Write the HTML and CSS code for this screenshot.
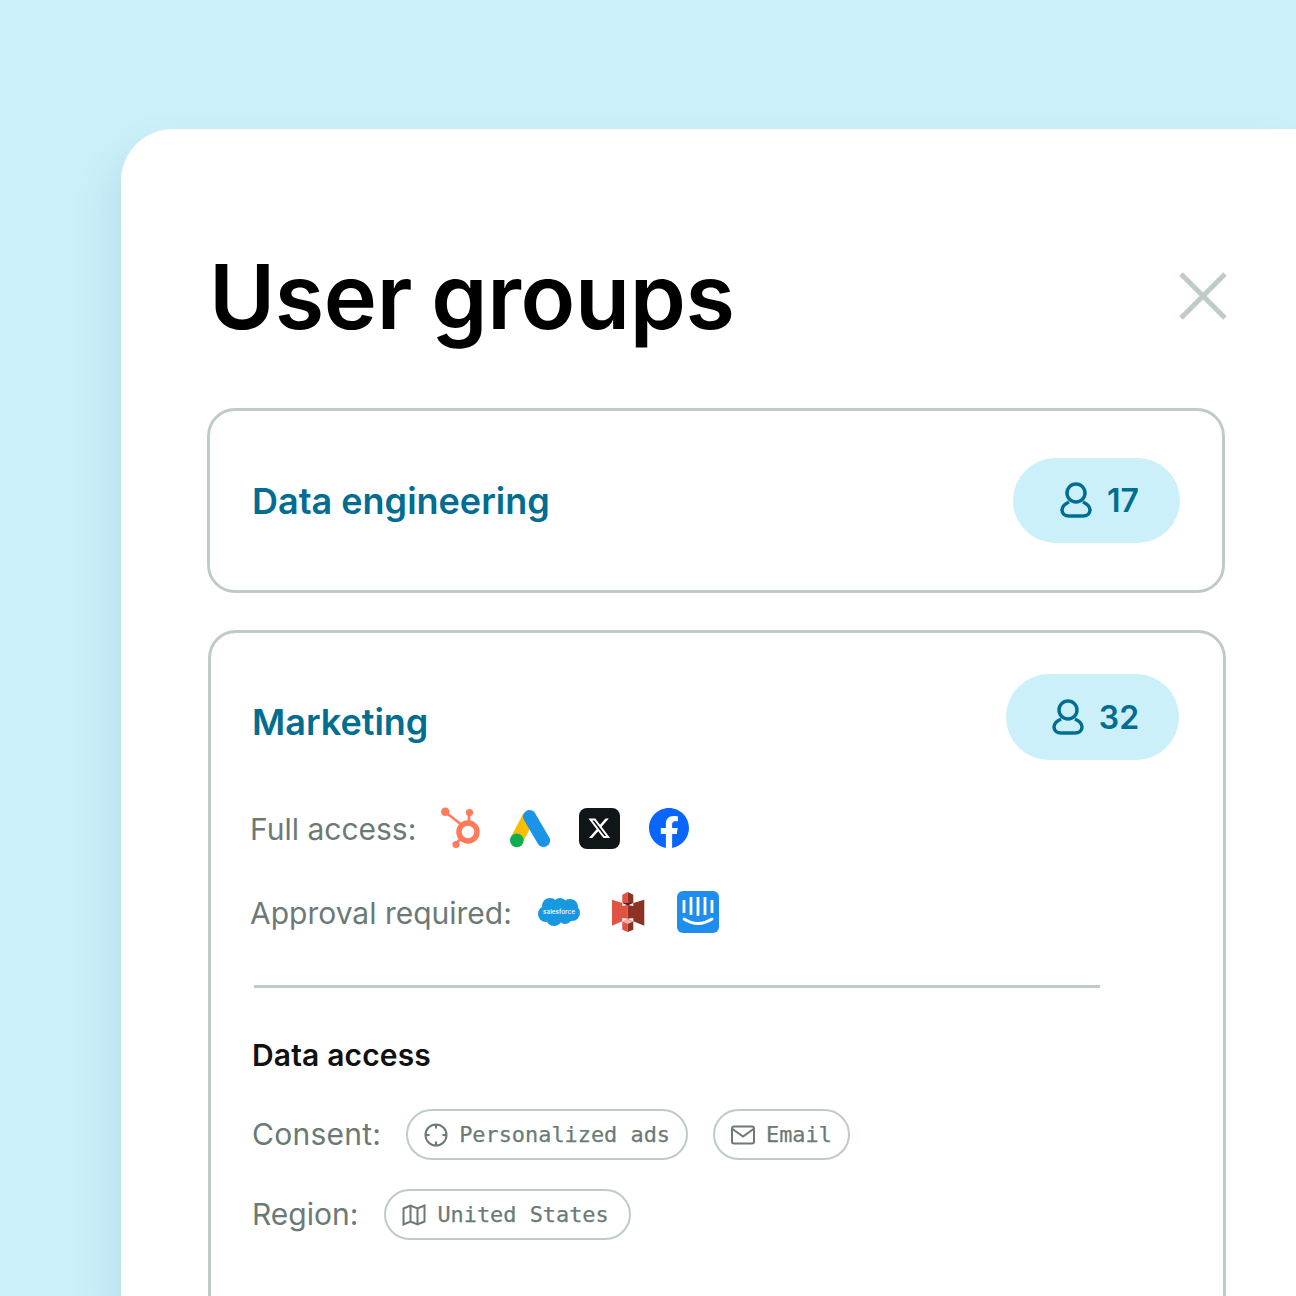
FILE: index.html
```html
<!DOCTYPE html>
<html lang="en">

<head>
    <meta charset="UTF-8">
    <title>User groups</title>
    <link rel="stylesheet" href="styles.css">
</head>

<body>
    <div class="panel">
        <div class="top">
            <h1>User groups</h1>
            <svg class="close" viewBox="0 0 48 48">
                <path d="M2 2L46 46M46 2L2 46" />
            </svg>
        </div>

        <div class="card first">
            <h2>Data engineering</h2>
            <div class="count">
                <svg class="user" viewBox="0 0 32 36">
                    <circle cx="16" cy="11" r="9" />
                    <path d="M9 20C5 22 2 25 2 28C2 32 5 34 9 34H23C27 34 30 32 30 28C30 25 27 22 23 20" />
                </svg>
                <span>17</span>
            </div>
        </div>

        <div class="card second">
            <div class="head">
                <h2>Marketing</h2>
                <div class="count wide">
                    <svg class="user" viewBox="0 0 32 36">
                        <circle cx="16" cy="11" r="9" />
                        <path d="M9 20C5 22 2 25 2 28C2 32 5 34 9 34H23C27 34 30 32 30 28C30 25 27 22 23 20" />
                    </svg>
                    <span>32</span>
                </div>
            </div>

            <div class="row access">
                <label>Full access:</label>
                <svg class="logo" width="40" height="42" viewBox="0 0 40 42">
                    <g fill="none" stroke="#ff7a59">
                        <circle cx="27" cy="25" r="9" stroke-width="5.5" />
                        <path d="M4 5L21 18M28 5V16M14 37L21 31" stroke-width="2.6" />
                    </g>
                    <g fill="#ff7a59">
                        <circle cx="4.3" cy="4.8" r="4.3" />
                        <circle cx="28.5" cy="5.5" r="3.6" />
                        <circle cx="15" cy="37.5" r="3.6" />
                    </g>
                </svg>
                <svg class="logo" width="40" height="40" viewBox="0 0 40 40">
                    <path d="M19 8.5L6.7 32" stroke="#fbbc04" stroke-width="13" fill="none" />
                    <path d="M19.5 8.5L33.5 32.5" stroke="#1a94e6" stroke-width="13" stroke-linecap="round" fill="none" />
                    <circle cx="6.8" cy="32.4" r="6.8" fill="#0ead4f" />
                </svg>
                <svg class="logo" width="41" height="41" viewBox="0 0 41 41">
                    <rect width="41" height="41" rx="8" fill="#101518" />
                    <path transform="translate(9.5 9.5) scale(0.9)" fill="#fff" d="M18.901 1.153h3.68l-8.04 9.19L24 22.846h-7.406l-5.8-7.584-6.638 7.584H.474l8.6-9.83L0 1.154h7.594l5.243 6.932ZM17.61 20.644h2.039L6.486 3.24H4.298Z" />
                </svg>
                <svg class="logo" width="40" height="40" viewBox="0 0 24 24">
                    <path fill="#0866ff" d="M24 12.073c0-6.627-5.373-12-12-12s-12 5.373-12 12c0 5.99 4.388 10.954 10.125 11.854v-8.385H7.078v-3.47h3.047V9.43c0-3.007 1.792-4.669 4.533-4.669 1.312 0 2.686.235 2.686.235v2.953H15.83c-1.491 0-1.956.925-1.956 1.874v2.25h3.328l-.532 3.47h-2.796v8.385C19.612 23.027 24 18.062 24 12.073z" />
                </svg>
            </div>

            <div class="row approval">
                <label>Approval required:</label>
                <svg class="logo" width="42" height="30" viewBox="0 0 42 30">
                    <g fill="#1798e0">
                        <circle cx="12" cy="9" r="8" />
                        <circle cx="22" cy="8" r="7" />
                        <circle cx="32" cy="10" r="8" />
                        <circle cx="34" cy="16" r="8" />
                        <circle cx="8" cy="17" r="8" />
                        <circle cx="16" cy="21" r="8" />
                        <circle cx="27" cy="20" r="7" />
                    </g>
                    <text x="21" y="16.5" text-anchor="middle" class="sf">salesforce</text>
                </svg>
                <svg class="logo s3" width="34" height="40" viewBox="0 0 34 40">
                    <path fill="#e05243" d="M1 7.700L11.300 11V29.300L1 33.700ZM11.300 2.700L16.700 0V11H11.300ZM11.300 14L16.700 13V26.700L11.300 26ZM11.300 29.500L16.700 27V40L11.300 37.700Z" />
                    <path fill="#8c3123" d="M33.300 7.700L22.300 11V29.300L33.300 33.700ZM22.300 2.700L16.700 0V11H22.300ZM22.300 14L16.700 13V26.700L22.300 26ZM22.300 29.500L16.700 27V40L22.300 37.700Z" />
                    <path fill="#f2b0a5" d="M11.300 29.500L16.700 27L22.300 29.500L16.700 32Z" />
                    <path fill="#5e1f18" d="M11.300 11H22.300L16.700 13.500Z" />
                </svg>
                <svg class="logo" width="42" height="42" viewBox="0 0 42 42">
                    <rect width="42" height="42" rx="6" fill="#1f8ded" />
                    <path d="M7 9V22M14 6V24M21 6V25M28 6V24M35 9V22" stroke="#fff" stroke-width="2.800" fill="none" />
                    <path d="M7 28Q21 37 35 28" stroke="#fff" stroke-width="2.800" fill="none" stroke-linecap="round" />
                </svg>
            </div>

            <hr>

            <h3>Data access</h3>

            <div class="row consent">
                <label>Consent:</label>
                <div class="chip">
                    <svg viewBox="0 0 24 24">
                        <circle cx="12" cy="12" r="10.500" />
                        <path d="M12 1.500V5.500M12 18.500V22.500M1.500 12H5.500M18.500 12H22.500" />
                    </svg>
                    <span>Personalized ads</span>
                </div>
                <div class="chip">
                    <svg viewBox="0 0 24 24">
                        <rect x="1" y="3.500" width="22" height="17" rx="2" />
                        <path d="M1.500 6L12 13.500L22.500 6" />
                    </svg>
                    <span>Email</span>
                </div>
            </div>

            <div class="row region">
                <label>Region:</label>
                <div class="chip wider">
                    <svg viewBox="0 0 24 24">
                        <path d="M1.500 5.500L8.500 2.500L15.500 5.500L22.500 2.500V18.500L15.500 21.500L8.500 18.500L1.500 21.500ZM8.500 2.500V18.500M15.500 5.500V21.500" />
                    </svg>
                    <span>United States</span>
                </div>
            </div>
        </div>
    </div>
</body>

</html>
```

FILE: styles.css
```css
html, body {
    margin: 0;
    height: 1296px;
    overflow: hidden;
}

body {
    background-color: #ccf0fa;
    font-family: Inter, "Noto Sans", sans-serif;
}

.panel {
    box-sizing: border-box;
    margin-top: 129px;
    margin-left: 121px;
    width: 1175px;
    height: 1167px;
    padding: 0 71px 0 86px;
    background-color: white;
    border-radius: 52px 0 0 0;
    box-shadow: -10px 20px 40px rgba(0, 90, 120, 0.1);
}

.top {
    box-sizing: border-box;
    display: flex;
    justify-content: space-between;
    align-items: center;
    height: 279px;
    padding-top: 55px;
}

h1 {
    margin: 0 0 0 2px;
    font-size: 90px;
    font-weight: 600;
    letter-spacing: -0.4px;
    word-spacing: -3px;
    color: #000;
}

.close {
    width: 48px;
    height: 48px;
    margin-right: -2px;
}

.close path {
    fill: none;
    stroke: #bfcbc6;
    stroke-width: 5;
}

.card {
    box-sizing: border-box;
    border: 3px solid #bfcbc6;
    border-radius: 28px;
    padding: 0 42px;
}

.first {
    height: 185px;
    display: flex;
    justify-content: space-between;
    align-items: center;
}

.first .count {
    margin-bottom: 1px;
}

.second {
    margin-top: 37px;
    margin-left: 1px;
    margin-right: -1px;
    height: 760px;
    padding: 41px 44px 0 41px;
}

h2 {
    margin: 0;
    font-size: 36px;
    font-weight: 600;
    color: #006d91;
}

.count {
    box-sizing: border-box;
    display: flex;
    align-items: center;
    justify-content: center;
    gap: 15px;
    width: 167px;
    height: 85px;
    padding-left: 6px;
    border-radius: 43px;
    background-color: #ccf0fa;
    color: #006d91;
    font-size: 32px;
    font-weight: 600;
}

.wide {
    width: 173px;
    height: 86px;
}

.user {
    width: 32px;
    height: 36px;
    fill: none;
    stroke: #006d91;
    stroke-width: 3.500;
}

.head {
    display: flex;
    justify-content: space-between;
}

.head h2 {
    margin-top: 26px;
}

.row {
    display: flex;
    align-items: center;
}

label {
    font-size: 30px;
    color: #6b7a75;
}

.access {
    margin-top: 47px;
    height: 42px;
    margin-left: -2px;
}

.access .logo {
    margin-right: 29px;
}

.access label {
    margin-right: 25px;
    padding-top: 2px;
}

.approval {
    margin-top: 42px;
    height: 42px;
    margin-left: -2px;
}

.approval label {
    margin-right: 26px;
    padding-top: 2px;
}

.approval .logo {
    margin-right: 31px;
}

.approval .s3 {
    margin-right: 32px;
}

.sf {
    font-size: 6.400px;
    font-weight: 500;
    fill: white;
    font-family: Inter, sans-serif;
}

hr {
    margin: 52px 79px 0 2px;
    height: 3px;
    border: none;
    background-color: #bfcbc6;
}

h3 {
    margin: 49px 0 0 0;
    font-size: 30px;
    font-weight: 600;
    letter-spacing: 0.15px;
    color: #111;
}

.consent {
    margin-top: 36px;
    gap: 25px;
}

.consent label {
    letter-spacing: 0.25px;
    margin-bottom: 2px;
}

.region {
    margin-top: 29px;
    gap: 26px;
}

.region label {
    margin-bottom: 2px;
}

.chip {
    box-sizing: border-box;
    display: flex;
    align-items: center;
    gap: 11px;
    height: 51px;
    padding: 0 16px;
    border: 2px solid #bfcbc6;
    border-radius: 26px;
    font-family: "DejaVu Sans Mono", monospace;
    font-size: 21.900px;
    color: #6b7a75;
    -webkit-text-stroke: 0.25px #6b7a75;
}

.wider {
    padding-right: 20px;
}

.chip svg {
    width: 24px;
    height: 24px;
    fill: none;
    stroke: #6b7a75;
    stroke-width: 2;
}
```
